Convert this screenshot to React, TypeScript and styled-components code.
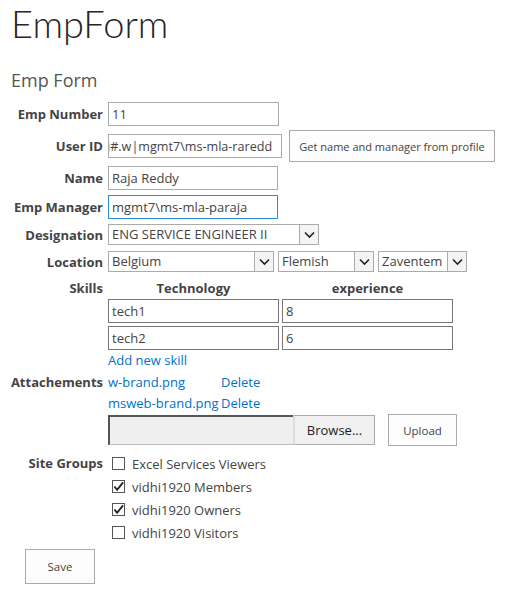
import React from "react";
import styled, { createGlobalStyle } from "styled-components";

const Global = createGlobalStyle`
  html, body { margin: 0; padding: 0; background: #fff; }
  body { font-family: "Segoe UI", "Open Sans", "Noto Sans", sans-serif; color: #444; }
`;

const Page = styled.div`
  width: 512px;
  height: 594px;
  overflow: hidden;
  position: relative;
`;

const Title = styled.h1`
  margin: 0;
  padding: 0 0 0 11px;
  font-family: "Lato", "Open Sans", sans-serif;
  font-size: 38px;
  font-weight: 300;
  line-height: 46px;
  height: 46px;
  color: #262626;
`;

const SubTitle = styled.h2`
  margin: 22px 0 0 0;
  padding-left: 11px;
  font-size: 18px;
  font-weight: 400;
  line-height: 24px;
  color: #555;
`;

const Form = styled.div`
  display: flex;
  flex-direction: column;
  margin-top: 10px;
`;

const Row = styled.div<{ $gap?: number; $top?: boolean }>`
  display: grid;
  grid-template-columns: 95px 1fr;
  column-gap: 5px;
  align-items: ${(p) => (p.$top ? "start" : "center")};
  margin-top: ${(p) => p.$gap ?? 0}px;
  padding-left: 8px;
`;

const Label = styled.div<{ $pad?: number }>`
  text-align: right;
  font-weight: 700;
  font-size: 13px;
  color: #444;
  white-space: nowrap;
  padding-top: ${(p) => p.$pad ?? 0}px;
`;

const Value = styled.div`
  display: flex;
  align-items: center;
  gap: 7px;
`;

const TextBox = styled.div<{ $w?: number; $focus?: boolean; $h?: number; $dark?: boolean }>`
  box-sizing: border-box;
  width: ${(p) => p.$w ?? 171}px;
  height: ${(p) => p.$h ?? 24}px;
  border: 1px solid ${(p) => (p.$focus ? "#2a8dd4" : p.$dark ? "#777" : "#ababab")};
  padding: 0 3px;
  font-size: 13px;
  line-height: 22px;
  color: #444;
  overflow: hidden;
  white-space: nowrap;
  background: #fff;
`;

const Clipped = styled.span`
  display: inline-block;
  margin-left: -5px;
  font-size: 12.6px;
`;

const Button = styled.div<{ $w: number; $h: number; $size?: number }>`
  box-sizing: border-box;
  width: ${(p) => p.$w}px;
  height: ${(p) => p.$h}px;
  border: 1px solid #ababab;
  background: #fdfdfd;
  font-size: ${(p) => p.$size ?? 11.5}px;
  color: #444;
  display: flex;
  align-items: center;
  justify-content: center;
  white-space: nowrap;
`;

const SelectBox = styled.div<{ $w: number }>`
  box-sizing: border-box;
  width: ${(p) => p.$w}px;
  height: 21px;
  border: 1px solid #ababab;
  display: flex;
  align-items: stretch;
  font-size: 13px;
  color: #444;
  background: #fff;
`;

const SelectText = styled.div`
  flex: 1;
  padding-left: 3px;
  line-height: 19px;
  white-space: nowrap;
  overflow: hidden;
`;

const Arrow = styled.div`
  box-sizing: border-box;
  width: 19px;
  border-left: 1px solid #ababab;
  background: #f4f4f4;
  display: flex;
  align-items: center;
  justify-content: center;
`;

const SelectGroup = styled.div`
  display: flex;
  gap: 4px;
`;

const SkillsGrid = styled.div`
  display: grid;
  grid-template-columns: 171px 171px;
  column-gap: 3px;
  row-gap: 3px;
`;

const ColHead = styled.div`
  text-align: center;
  font-weight: 700;
  font-size: 13px;
  color: #444;
  line-height: 18px;
  margin-bottom: -1px;
`;

const Link = styled.a`
  color: #0072c6;
  text-decoration: none;
  font-size: 13px;
  line-height: 20px;
  cursor: pointer;
`;

const Column = styled.div<{ $gap?: number }>`
  display: flex;
  flex-direction: column;
  gap: ${(p) => p.$gap ?? 0}px;
`;

const AttachRow = styled.div`
  display: grid;
  grid-template-columns: 113px auto;
  line-height: 20px;
  height: 21px;
`;

const FileLine = styled.div`
  display: flex;
  align-items: center;
  gap: 13px;
  margin-top: 0px;
`;

const FileInput = styled.div`
  display: flex;
  width: 267px;
  height: 30px;
`;

const FileField = styled.div`
  box-sizing: border-box;
  flex: 1;
  background: #efefef;
  border-top: 2px solid #555;
  border-left: 2px solid #555;
  border-bottom: 1px solid #bbb;
`;

const BrowseBtn = styled.div`
  box-sizing: border-box;
  width: 82px;
  background: #f0f0f0;
  border: 1px solid #ababab;
  border-left: 2px solid #ddd;
  font-size: 13px;
  color: #222;
  display: flex;
  align-items: center;
  justify-content: center;
`;

const CheckRow = styled.label`
  display: flex;
  align-items: center;
  gap: 7px;
  font-size: 13px;
  color: #444;
  height: 23px;
  padding-left: 4px;
`;

const CheckBox = styled.span`
  box-sizing: border-box;
  width: 13px;
  height: 13px;
  border: 1px solid #555;
  background: #fff;
  display: inline-flex;
  align-items: center;
  justify-content: center;
`;

const SaveWrap = styled.div`
  padding-left: 25px;
  margin-top: 5px;
`;

const Chevron = () => (
  <svg width="11" height="8" viewBox="0 0 11 8">
    <path d="M1 1.5 L5.5 6 L10 1.5" fill="none" stroke="#222" strokeWidth="1.6" />
  </svg>
);

const Tick = () => (
  <svg width="12" height="11" viewBox="0 0 12 11">
    <path d="M1.5 5.5 L4.5 9 L11 1" fill="none" stroke="#222" strokeWidth="2" />
  </svg>
);

const Select = ({ w, text }: { w: number; text: string }) => (
  <SelectBox $w={w}>
    <SelectText>{text}</SelectText>
    <Arrow>
      <Chevron />
    </Arrow>
  </SelectBox>
);

const groups = [
  { name: "Excel Services Viewers", checked: false },
  { name: "vidhi1920 Members", checked: true },
  { name: "vidhi1920 Owners", checked: true },
  { name: "vidhi1920 Visitors", checked: false },
];

export default function App() {
  return (
    <Page>
      <Global />
      <Title>EmpForm</Title>
      <SubTitle>Emp Form</SubTitle>
      <Form>
        <Row $gap={0}>
          <Label>Emp Number</Label>
          <Value>
            <TextBox $w={171}>11</TextBox>
          </Value>
        </Row>
        <Row $gap={4}>
          <Label>User ID</Label>
          <Value>
            <TextBox $w={174}>
              <Clipped>i#.w|mgmt7\ms-mla-raredd</Clipped>
            </TextBox>
            <Button $w={206} $h={32} $size={11}>Get name and manager from profile</Button>
          </Value>
        </Row>
        <Row $gap={4}>
          <Label>Name</Label>
          <Value>
            <TextBox $w={170}>Raja Reddy</TextBox>
          </Value>
        </Row>
        <Row $gap={5}>
          <Label>Emp Manager</Label>
          <Value>
            <TextBox $w={170} $focus>mgmt7\ms-mla-paraja</TextBox>
          </Value>
        </Row>
        <Row $gap={5}>
          <Label>Designation</Label>
          <Value>
            <Select w={211} text="ENG SERVICE ENGINEER II" />
          </Value>
        </Row>
        <Row $gap={6}>
          <Label>Location</Label>
          <Value>
            <SelectGroup>
              <Select w={166} text="Belgium" />
              <Select w={96} text="Flemish" />
              <Select w={89} text="Zaventem" />
            </SelectGroup>
          </Value>
        </Row>
        <Row $gap={7} $top>
          <Label>Skills</Label>
          <Column>
            <SkillsGrid>
              <ColHead>Technology</ColHead>
              <ColHead>experience</ColHead>
              <TextBox $w={171} $dark>tech1</TextBox>
              <TextBox $w={171} $dark>8</TextBox>
              <TextBox $w={171} $dark>tech2</TextBox>
              <TextBox $w={171} $dark>6</TextBox>
            </SkillsGrid>
            <Link>Add new skill</Link>
          </Column>
        </Row>
        <Row $gap={2} $top>
          <Label $pad={1}>Attachements</Label>
          <Column>
            <AttachRow>
              <Link>w-brand.png</Link>
              <Link>Delete</Link>
            </AttachRow>
            <AttachRow>
              <Link>msweb-brand.png</Link>
              <Link>Delete</Link>
            </AttachRow>
            <FileLine>
              <FileInput>
                <FileField />
                <BrowseBtn>Browse...</BrowseBtn>
              </FileInput>
              <Button $w={69} $h={32}>Upload</Button>
            </FileLine>
          </Column>
        </Row>
        <Row $gap={6} $top>
          <Label $pad={2}>Site Groups</Label>
          <Column>
            {groups.map((g) => (
              <CheckRow key={g.name}>
                <CheckBox>{g.checked && <Tick />}</CheckBox>
                {g.name}
              </CheckRow>
            ))}
          </Column>
        </Row>
        <SaveWrap>
          <Button $w={70} $h={35}>Save</Button>
        </SaveWrap>
      </Form>
    </Page>
  );
}
